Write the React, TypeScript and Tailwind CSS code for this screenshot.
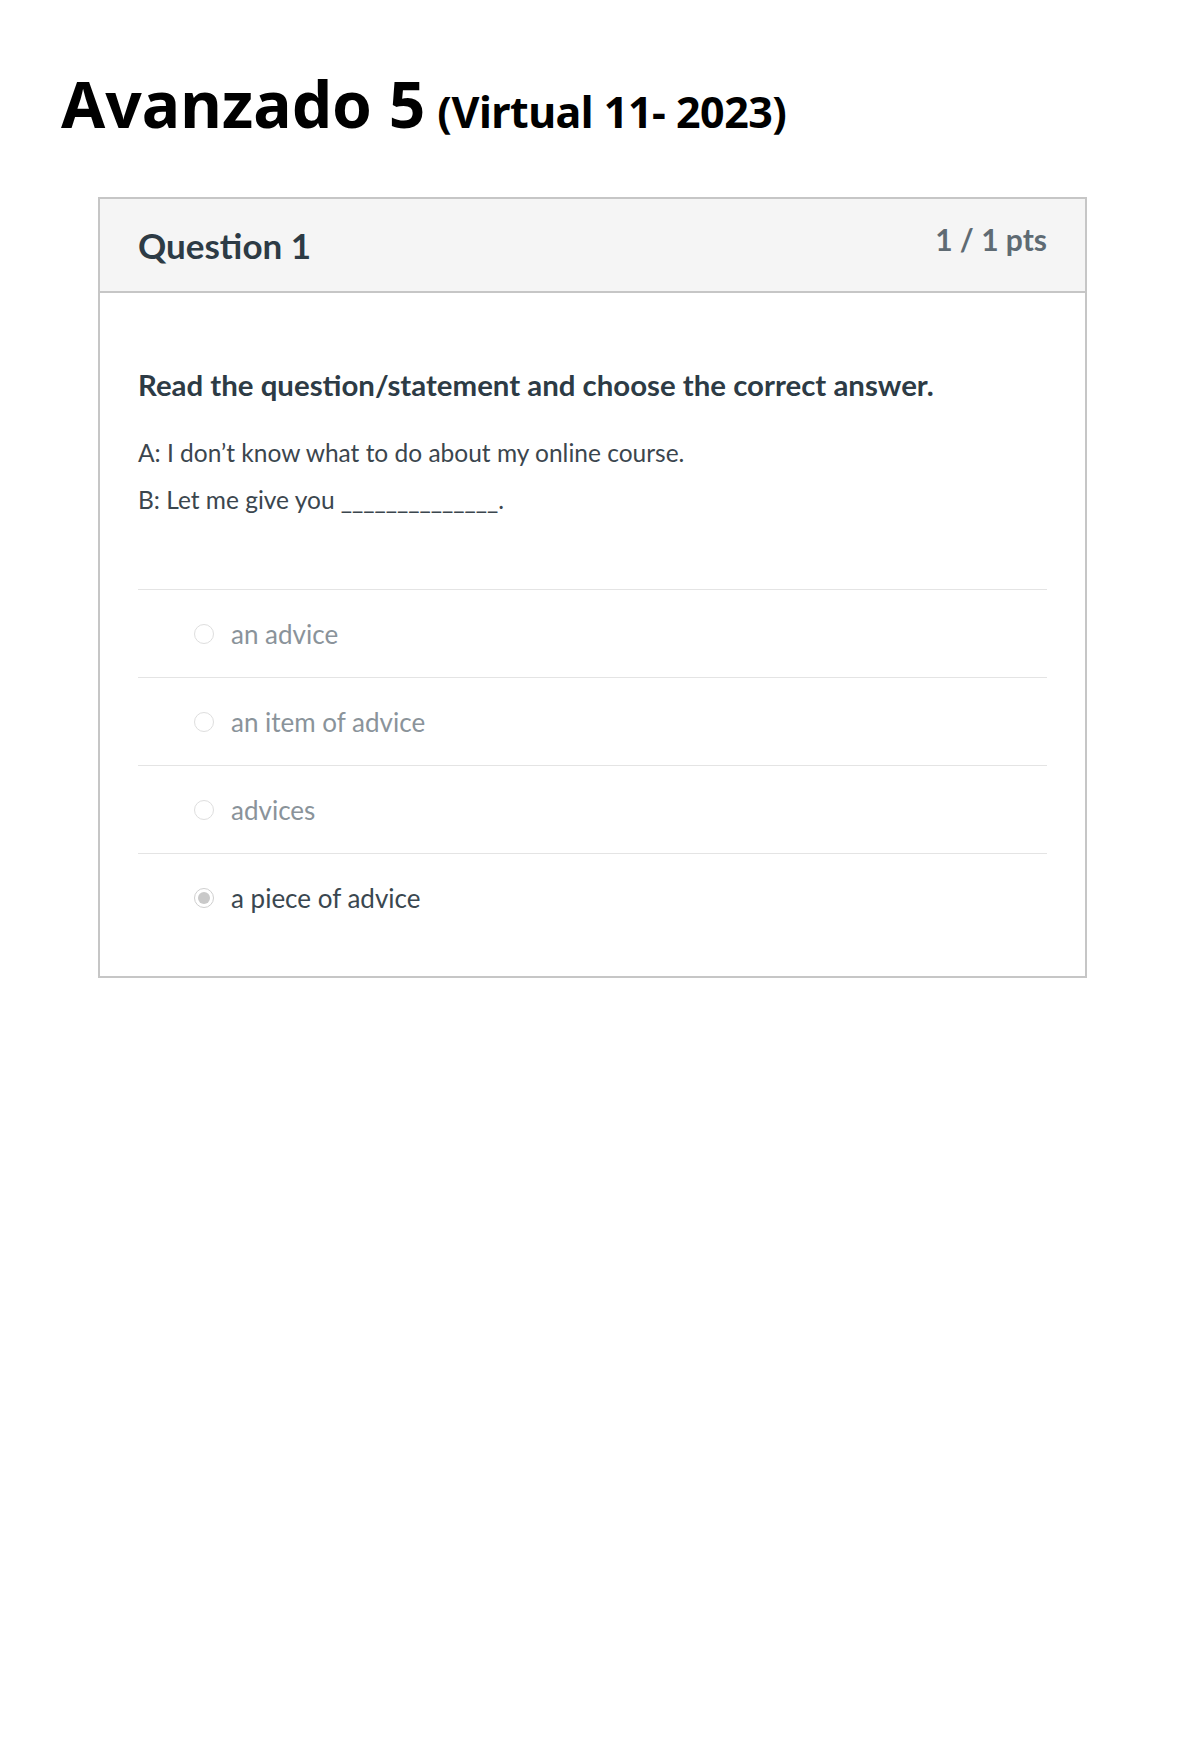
const options = [
  { label: "an advice", selected: false },
  { label: "an item of advice", selected: false },
  { label: "advices", selected: false },
  { label: "a piece of advice", selected: true },
];

function Radio({ checked }: { checked: boolean }) {
  if (checked) {
    return (
      <span className="flex items-center justify-center w-5 h-5 rounded-full border border-[#cfcfcf] bg-white shrink-0">
        <span className="w-3 h-3 rounded-full bg-[#c9c9c9]" />
      </span>
    );
  }
  return <span className="w-5 h-5 rounded-full border border-[#dedede] bg-white shrink-0" />;
}

export default function App() {
  return (
    <div className="min-h-[1749px] bg-white font-['Lato',sans-serif]">
      <h1 className="pt-[72px] pl-[61px] leading-none font-['Noto_Sans',sans-serif] font-bold text-black flex items-baseline">
        <span className="text-[64px]">Avanzado 5</span>
        <span className="text-[43px] ml-[12px] tracking-[-0.5px]">(Virtual 11- 2023)</span>
      </h1>

      <div className="ml-[98px] mt-[61px] w-[989px] border-2 border-[#c6c6c6]">
        {/* Header */}
        <div className="h-[94px] bg-[#f5f5f5] border-b-2 border-[#c6c6c6] px-[38px] flex justify-between items-start">
          <div className="mt-[29px] text-[35px] leading-none font-bold text-[#2d3b45]">Question 1</div>
          <div className="mt-[25px] text-[30px] leading-none font-bold text-[#5f6b73]">1 / 1 pts</div>
        </div>

        {/* Body */}
        <div className="px-[38px] pt-[77px] pb-[35px]">
          <p className="text-[29.4px] leading-none font-bold text-[#2d3b45]">
            Read the question/statement and choose the correct answer.
          </p>
          <p className="mt-[42px] text-[24.5px] leading-none text-[#3b464e]">
            A: I don’t know what to do about my online course.
          </p>
          <p className="mt-[22px] text-[24.5px] leading-none text-[#3b464e]">
            B: Let me give you ______________.
          </p>

          <div className="mt-[77px]">
            {options.map((o) => (
              <div key={o.label} className="h-[88px] border-t border-[#e4e4e4] flex items-center pl-[56px]">
                <Radio checked={o.selected} />
                <span
                  className={`ml-[17px] text-[26px] leading-none ${
                    o.selected ? "text-[#3a4750]" : "text-[#8a939a]"
                  }`}
                >
                  {o.label}
                </span>
              </div>
            ))}
          </div>
        </div>
      </div>
    </div>
  );
}
